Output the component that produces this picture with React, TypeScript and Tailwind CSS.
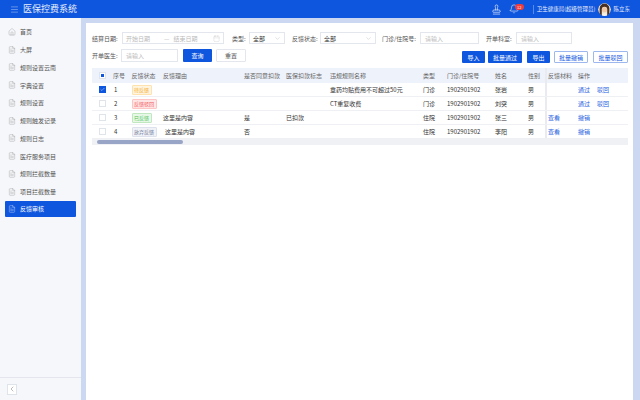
import React from 'react';
import { Menu, Stamp, Bell, Home, FileText, Calendar, ChevronDown, ChevronLeft, Check } from 'lucide-react';

const menuItems = ['大屏', '规则设置云南', '字典设置', '规则设置', '规则触发记录', '规则日志', '医疗服务项目', '规则拦截数量', '项目拦截数量'];

const rows = [
  { no: 1, tag: '待反馈', tagCls: 'bg-[#fff5e0] border-[#ffe2ae] text-[#f5a623]', reason: '', reasonCls: '', agree: '', flag: '', rule: '章药均贴费用不可超过50元', type: '门诊', id: '1902901902', name: '张岩', checked: true, material: false },
  { no: 2, tag: '反馈驳回', tagCls: 'bg-[#ffe6e6] border-[#ffc4c4] text-[#f0565a]', reason: '', reasonCls: '', agree: '', flag: '', rule: 'CT重复收费', type: '门诊', id: '1902901902', name: '刘突', checked: false, material: false },
  { no: 3, tag: '已反馈', tagCls: 'bg-[#e8f8e8] border-[#bfe8bf] text-[#4fbf57]', reason: '这里是内容', reasonCls: '', agree: '是', flag: '已扣款', rule: '', type: '住院', id: '1902901902', name: '张三', checked: false, material: true },
  { no: 4, tag: '放弃反馈', tagCls: 'bg-[#f0f2f8] border-[#dde1ee] text-[#6b7390]', reason: '这里是内容', reasonCls: 'pl-[2px]', agree: '否', flag: '', rule: '', type: '住院', id: '1902901902', name: '李阳', checked: false, material: true },
];

const SelectBox = ({ width }: { width: string }) => (
  <div className={`${width} h-[12px] border border-[#e3e6ec] flex items-center justify-between px-[3px] text-[6px] text-[#333]`}>
    全部
    <ChevronDown size={7} strokeWidth={1.2} className="text-[#aaa]" />
  </div>
);

const InputBox = ({ width, height = 'h-[12px]' }: { width: string; height?: string }) => (
  <div className={`${width} ${height} border border-[#e3e6ec] flex items-center pl-[4px] text-[6px] text-[#bbb]`}>请输入</div>
);

const Label = ({ width, text }: { width: string; text: string }) => (
  <span className={`${width} shrink-0 whitespace-nowrap text-[6px] text-[#555]`}>{text}</span>
);

export default function App() {
  return (
    <div className="w-[640px] h-[400px] overflow-hidden flex flex-col bg-[#ccd7f2] text-[#333]" style={{ fontFamily: '"Noto Sans CJK SC", "Liberation Sans", sans-serif' }}>
      <header className="h-[18px] shrink-0 bg-[#0f56de] flex items-center pl-[10px] pr-[10px] text-white">
        <Menu size={9} strokeWidth={1.2} className="opacity-80" />
        <span className="ml-[4px] text-[9px] opacity-90">医保控费系统</span>
        <div className="ml-auto flex items-center">
          <Stamp size={11} strokeWidth={1.3} />
          <div className="relative ml-[7px] mr-[14px]">
            <Bell size={10} strokeWidth={1.3} />
            <span className="absolute top-0 left-[6px] w-[9px] h-[6px] rounded-full bg-[#ef3b3b] text-[4px] leading-[6px] text-center">12</span>
          </div>
          <span className="w-px h-[9px] bg-white/30 mr-[3px]" />
          <span className="text-[5.5px] opacity-90">卫生健康局(超级管理员)</span>
          <svg viewBox="0 0 12 12" className="w-[13px] h-[13px] ml-[3px] mr-[2px] rounded-full">
            <circle cx="6" cy="6" r="6" fill="#efe6d8" />
            <path d="M1.5 12 V5 a4.5 4.5 0 0 1 9 0 V12 H8.5 V6 a2.5 2.5 0 0 0-5 0 V12Z" fill="#4a3022" />
            <circle cx="6" cy="6.2" r="2.4" fill="#f0c8a8" />
            <path d="M3.5 12 a2.5 2.5 0 0 1 5 0Z" fill="#f5efe6" />
          </svg>
          <span className="text-[5.5px] opacity-90">陈立东</span>
        </div>
      </header>

      <div className="flex flex-1 min-h-0">
        <aside className="w-[81px] shrink-0 bg-[#f5f7fa] flex flex-col text-[6px] text-[#555]">
          <nav className="flex-1 pt-[5px] px-[5px] flex flex-col">
            <div className="h-[17.75px] flex items-center pl-[3px] gap-[4px]">
              <Home size={8} strokeWidth={1} className="text-[#888]" />
              首页
            </div>
            {menuItems.map((m) => (
              <div key={m} className="h-[17.75px] flex items-center pl-[3px] gap-[4px]">
                <FileText size={8} strokeWidth={1} className="text-[#888]" />
                {m}
              </div>
            ))}
            <div className="h-[16px] flex items-center pl-[3px] gap-[4px] rounded-[1px] bg-[#0f56de] text-white">
              <FileText size={8} strokeWidth={1} />
              反馈审核
            </div>
          </nav>
          <div className="h-[23px] border-t border-[#e3e6ec] flex items-center pl-[7px]">
            <div className="w-[10px] h-[11px] bg-white border border-[#dfe3ea] flex items-center justify-center">
              <ChevronLeft size={8} strokeWidth={1.5} className="text-[#777]" />
            </div>
          </div>
        </aside>

        <main className="flex-1 min-w-0 mt-[5px] ml-[5px] mr-[7px] bg-white pl-[6px] pr-[5px] pt-[9px]">
          <div className="flex items-center h-[12px]">
            <Label width="w-[30px]" text="结算日期:" />
            <div className="w-[102px] h-[12px] border border-[#e3e6ec] flex items-center px-[3px] text-[6px] text-[#bbb]">
              开始日期
              <span className="ml-[14px]">—</span>
              <span className="ml-[4px]">结束日期</span>
              <Calendar size={7} strokeWidth={1} className="ml-auto" />
            </div>
            <div className="w-[8px]" />
            <Label width="w-[17px]" text="类型:" />
            <SelectBox width="w-[36px]" />
            <div className="w-[7px]" />
            <Label width="w-[28px]" text="反馈状态:" />
            <SelectBox width="w-[56px]" />
            <div className="w-[6px]" />
            <Label width="w-[38px]" text="门诊/住院号:" />
            <InputBox width="w-[59px]" />
            <div className="w-[7px]" />
            <Label width="w-[30px]" text="开单科室:" />
            <InputBox width="w-[56px]" />
          </div>

          <div className="flex items-start h-[14px] mt-[5px]">
            <Label width="w-[29px] leading-[13px]" text="开单医生:" />
            <InputBox width="w-[57px]" height="h-[13px]" />
            <button className="ml-[5px] w-[29px] h-[13px] bg-[#0f56de] text-white text-[6px] rounded-[1px]">查询</button>
            <button className="ml-[4px] w-[30px] h-[13px] border border-[#e3e6ec] text-[6px] text-[#555] rounded-[1px]">重置</button>
            <div className="ml-auto mt-[2px] flex items-center text-[6px]">
              <button className="w-[23px] h-[12px] bg-[#0f56de] text-white rounded-[1px]">导入</button>
              <button className="ml-[3px] w-[34px] h-[12px] bg-[#0f56de] text-white rounded-[1px]">批量通过</button>
              <button className="ml-[5px] w-[23px] h-[12px] bg-[#0f56de] text-white rounded-[1px]">导出</button>
              <button className="ml-[4px] w-[34px] h-[12px] border border-[#9db8ee] text-[#0f56de] rounded-[1px]">批量撤销</button>
              <button className="ml-[5px] w-[35px] h-[12px] border border-[#9db8ee] text-[#0f56de] rounded-[1px]">批量驳回</button>
            </div>
          </div>

          <div className="mt-[5px] text-[6px] text-[#333]">
            <div className="flex items-center h-[15px] bg-[#eef2fb] text-[#666] whitespace-nowrap">
              <div className="w-[21px] flex justify-center"><span className="w-[7px] h-[7px] bg-white border border-[#dfe3ea] flex items-center justify-center"><span className="w-[3px] h-[3px] bg-[#0f56de]" /></span></div>
              <div className="w-[18.5px]">序号</div>
              <div className="w-[31.5px]">反馈状态</div>
              <div className="w-[81px]">反馈理由</div>
              <div className="w-[42px]">是否同意扣款</div>
              <div className="w-[44px]">医保扣款标志</div>
              <div className="w-[93px]">违规规则名称</div>
              <div className="w-[24px]">类型</div>
              <div className="w-[48px]">门诊/住院号</div>
              <div className="w-[33px]">姓名</div>
              <div className="w-[17px]">性别</div>
              <div className="w-[33px] border-l-2 border-[#e9ebf0] pl-[1px] h-full flex items-center">反馈材料</div>
              <div className="flex-1">操作</div>
            </div>
            {rows.map((r) => (
              <div key={r.no} className="flex items-center h-[14px] border-b border-[#eef0f4] whitespace-nowrap">
                <div className="w-[21px] flex justify-center">
                  {r.checked ? (
                    <span className="w-[7px] h-[7px] bg-[#0f56de] flex items-center justify-center"><Check size={5} strokeWidth={2} className="text-white" /></span>
                  ) : (
                    <span className="w-[7px] h-[7px] border border-[#dfe3ea]" />
                  )}
                </div>
                <div className="w-[18.5px] pl-[1px]">{r.no}</div>
                <div className="w-[31.5px]">
                  <span className={`inline-flex items-center border px-[1.5px] h-[10px] text-[5px] rounded-[1px] ${r.tagCls}`}>{r.tag}</span>
                </div>
                <div className={`w-[81px] ${r.reasonCls}`}>{r.reason}</div>
                <div className="w-[42px]">{r.agree}</div>
                <div className="w-[44px]">{r.flag}</div>
                <div className="w-[93px]">{r.rule}</div>
                <div className="w-[24px]">{r.type}</div>
                <div className="w-[48px]">{r.id}</div>
                <div className="w-[33px]">{r.name}</div>
                <div className="w-[17px]">男</div>
                <div className="w-[33px] border-l-2 border-[#e9ebf0] pl-[1px] h-full flex items-center text-[#1f62e0]">{r.material ? '查看' : ''}</div>
                <div className="flex-1 flex gap-[7px] text-[#1f62e0]">
                  {r.material ? <span>撤销</span> : <><span>通过</span><span>驳回</span></>}
                </div>
              </div>
            ))}
            <div className="h-[6px] bg-[#f0f1f4] pl-[5px] flex items-center">
              <div className="w-[86px] h-[3.5px] rounded-full bg-[#98a5c6]" />
            </div>
          </div>
        </main>
      </div>
    </div>
  );
}
